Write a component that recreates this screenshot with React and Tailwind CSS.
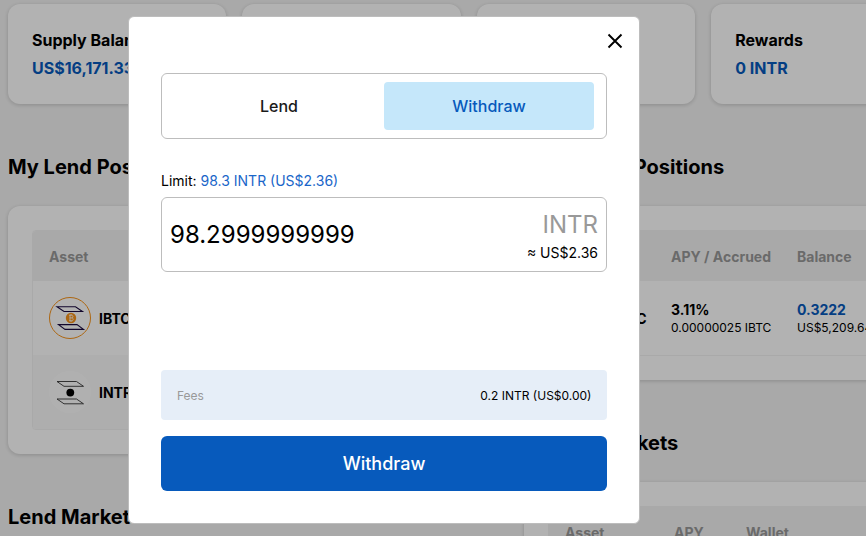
import React from "react";

function StatCard({ title, value }) {
  return (
    <div className="h-[100px] rounded-xl bg-white px-6 pt-6 shadow-[0_1px_4px_rgba(0,0,0,0.18)]">
      <div className="text-base leading-6 font-bold whitespace-nowrap text-black">{title}</div>
      <div className="mt-1 text-base leading-6 font-bold whitespace-nowrap text-[#075abc]">{value}</div>
    </div>
  );
}

function Panel({ title, columns, titleClass = "", children }) {
  return (
    <section>
      <h2 className={`text-xl leading-[30px] font-bold whitespace-nowrap text-black ${titleClass}`}>{title}</h2>
      <div className="mt-6 rounded-xl bg-white p-6 shadow-[0_1px_4px_rgba(0,0,0,0.18)]">
        <div className="overflow-hidden rounded border border-[#f3f3f3]">
          <div className="flex h-[50px] items-center bg-[#f3f3f3] pt-0.5 pl-4 text-sm font-bold text-[#999]">
            {columns.map(([name, width]) => (
              <span key={name} className={`${width} shrink-0 whitespace-nowrap`}>{name}</span>
            ))}
          </div>
          {children}
        </div>
      </div>
    </section>
  );
}

function BitcoinIcon() {
  return (
    <svg width="42" height="42" viewBox="0 0 42 42" fill="none">
      <circle cx="21" cy="21" r="20.5" stroke="#f7931a" />
      <path d="M8 9.7h18.5l7 4.8H15zM9.5 27.6h18.5l6.5 4.8H16z" stroke="#1a0a40" strokeWidth="1.1" />
      <circle cx="22" cy="21" r="5.2" fill="#f7931a" />
      <path
        d="M20 18.3h2.7c1.7 0 1.7 2.6 0 2.6h-2M21 18.3v5.3M22.7 20.9c2 0 2 2.8 0 2.8H20M21.3 17.3v1M22.7 17.3v1M21.3 23.7v1M22.7 23.7v1"
        stroke="#fff"
        strokeWidth="0.8"
      />
    </svg>
  );
}

function InterlayIcon() {
  return (
    <svg width="42" height="42" viewBox="0 0 42 42" fill="none">
      <circle cx="21" cy="21" r="21" fill="#fdfdfd" />
      <path d="M8 10.5h19.5l7 4.8H15zM8 28h19.5l7 4.8H15z" stroke="#333" strokeWidth="0.9" />
      <circle cx="21.3" cy="21.6" r="3.9" fill="#000" />
    </svg>
  );
}

const positionColumns = [["Asset", "w-[106px]"], ["APY / Accrued", "w-[126px]"], ["Balance", "w-[100px]"]];
const marketColumns = [["Asset", "w-[109px]"], ["APY", "w-[72px]"], ["Wallet", "w-[100px]"]];

function Dashboard() {
  return (
    <div className="w-[921.6px] shrink-0 pt-1">
      <div className="grid grid-cols-4 gap-4">
        <StatCard title="Supply Balance" value="US$16,171.33" />
        <StatCard />
        <StatCard />
        <StatCard title="Rewards" value="0 INTR" />
      </div>
      <div className="mt-12 grid grid-cols-[500px_405px] items-start gap-4">
        <div className="flex flex-col gap-12">
          <Panel title="My Lend Positions" columns={positionColumns}>
            <div className="flex h-[74px] items-center gap-2 pl-4">
              <BitcoinIcon />
              <span className="pt-px text-sm font-bold">IBTC</span>
            </div>
            <div className="flex h-[74px] items-center gap-2 bg-[#fafafa] pl-4">
              <InterlayIcon />
              <span className="pt-0.5 text-sm font-bold">INTR</span>
            </div>
          </Panel>
          <Panel title="Lend Markets" columns={marketColumns} />
        </div>
        <div className="flex flex-col gap-12">
          <Panel title="My Borrow Positions" columns={positionColumns} titleClass="-ml-px">
            <div className="flex h-[74px] items-center pl-4">
              <div className="flex w-[106px] items-center gap-2">
                <BitcoinIcon />
                <span className="pt-px text-sm font-bold">IBTC</span>
              </div>
              <div className="w-[126px] shrink-0 pt-0.5 whitespace-nowrap">
                <div className="text-sm leading-[18px] font-bold">3.11%</div>
                <div className="text-xs leading-[18px]">0.00000025 IBTC</div>
              </div>
              <div className="pt-0.5 whitespace-nowrap">
                <div className="text-sm leading-[18px] font-bold text-[#075abc]">0.3222</div>
                <div className="text-xs leading-[18px]">US$5,209.64</div>
              </div>
            </div>
          </Panel>
          <Panel title="Borrow Markets" columns={marketColumns} titleClass="-ml-px" />
        </div>
      </div>
    </div>
  );
}

function WithdrawModal() {
  return (
    <div className="flex h-[508px] w-[512px] flex-col rounded-md border border-[#bdbdbd] bg-white px-8 pb-8">
      <div className="-mr-4 flex h-14 shrink-0 items-start justify-end pt-4">
        <svg width="16" height="16" viewBox="0 0 16 16" stroke="#000" strokeWidth="1.9">
          <path d="M1.5 1.5l13 13M14.5 1.5l-13 13" />
        </svg>
      </div>
      <div className="flex h-[66px] shrink-0 rounded-md border border-[#bdbdbd] px-3 py-2 text-base font-medium">
        <div className="flex flex-1 items-center justify-center text-[#1a1a1a]">Lend</div>
        <div className="flex flex-1 items-center justify-center rounded bg-[#c5e7fa] text-[#075abc]">Withdraw</div>
      </div>
      <div className="mt-8 text-sm leading-5">
        Limit: <span className="text-[#1a66c9]">98.3 INTR (US$2.36)</span>
      </div>
      <div className="mt-1.5 flex h-[75px] shrink-0 items-center justify-between rounded-md border border-[#bdbdbd] px-2">
        <span className="pt-px text-2xl">98.2999999999</span>
        <div className="pt-1 text-right">
          <div className="text-2xl leading-8 text-[#999]">INTR</div>
          <div className="text-sm leading-6">≈ US$2.36</div>
        </div>
      </div>
      <div className="mt-auto flex h-[50px] shrink-0 items-center justify-between rounded bg-[#e6eef8] pt-0.5 pr-[15.5px] pl-4 text-xs">
        <span className="text-[#999]">Fees</span>
        <span>0.2 INTR (US$0.00)</span>
      </div>
      <button className="mt-4 h-[55px] shrink-0 rounded-md bg-[#075abc] pt-px text-lg font-medium text-white">Withdraw</button>
    </div>
  );
}

export default function App() {
  return (
    <div className="relative h-[536px] w-[866px] overflow-hidden bg-[#f3f3f3] pl-2 font-[Inter,sans-serif] text-black">
      <Dashboard />
      <div className="absolute inset-0 flex items-start bg-black/30 pt-4 pl-32">
        <WithdrawModal />
      </div>
    </div>
  );
}
